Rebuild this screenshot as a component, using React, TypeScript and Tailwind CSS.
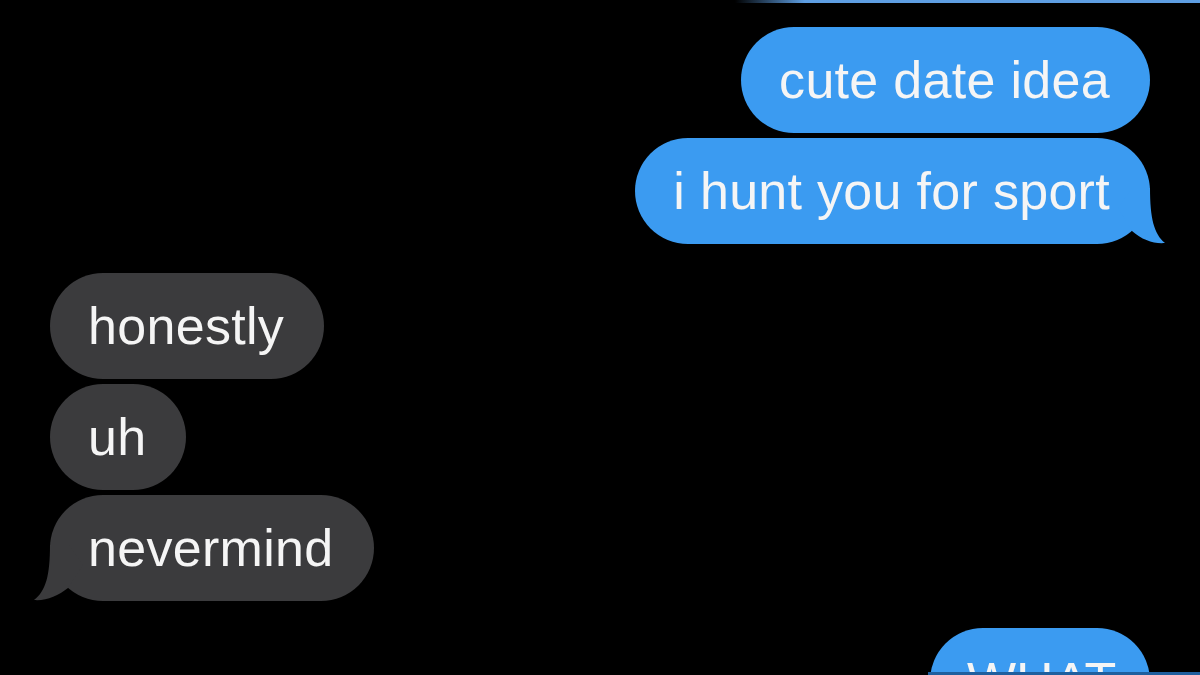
import React from "react";

const font = { fontFamily: '"Liberation Sans", Arial, sans-serif' };

function SentTail() {
  return (
    <svg
      className="absolute right-[-16px] bottom-0"
      width="48"
      height="56"
      viewBox="0 0 48 56"
      fill="#3b9bf1"
    >
      <path d="M14 0 L32 0 C32 30 36 46 47 55 C36 56 24 52 14 43 L0 20 Z" />
    </svg>
  );
}

function ReceivedTail() {
  return (
    <svg
      className="absolute left-[-17px] bottom-0"
      width="50"
      height="56"
      viewBox="0 0 50 56"
      fill="#3b3b3d"
    >
      <path d="M36 0 L17 0 C17 30 13 46 1 55 C13 56 25 51 35 43 L50 20 Z" />
    </svg>
  );
}

function Bubble({
  text,
  sent,
  tail,
}: {
  text: string;
  sent?: boolean;
  tail?: boolean;
}) {
  return (
    <div
      className={`relative flex h-[106px] items-center rounded-full pl-[38px] pr-[40px] text-[52px] leading-none text-[#f5f5f5] ${
        sent ? "bg-[#3b9bf1]" : "bg-[#3b3b3d]"
      }`}
    >
      {tail && (sent ? <SentTail /> : <ReceivedTail />)}
      <span className="relative whitespace-nowrap tracking-[0.3px]">{text}</span>
    </div>
  );
}

export default function App() {
  return (
    <div className="relative h-[675px] w-[1200px] overflow-hidden bg-black" style={font}>
      <div className="flex justify-end">
        <div className="h-[3px] w-[465px] bg-gradient-to-r from-transparent via-[#5e9ee2] via-15% to-[#5e9ee2]" />
      </div>

      <div className="mt-[24px] flex flex-col items-end gap-[5px] pr-[50px]">
        <Bubble text="cute date idea" sent />
        <Bubble text="i hunt you for sport" sent tail />
      </div>

      <div className="mt-[29px] flex flex-col items-start gap-[5px] pl-[50px]">
        <Bubble text="honestly" />
        <Bubble text="uh" />
        <Bubble text="nevermind" tail />
      </div>

      {/* last bubble runs off the bottom edge, as in the screenshot */}
      <div className="mt-[27px] flex flex-col items-end pr-[50px]">
        <div className="flex h-[106px] w-[220px] items-center rounded-full bg-[#3b9bf1] pl-[37px] text-[52px] leading-none text-[#f5f5f5]">
          <span>WHAT</span>
        </div>
      </div>

      <div className="absolute bottom-0 left-[928px] right-0 h-[3px] bg-[#1f5f9e]" />
    </div>
  );
}
